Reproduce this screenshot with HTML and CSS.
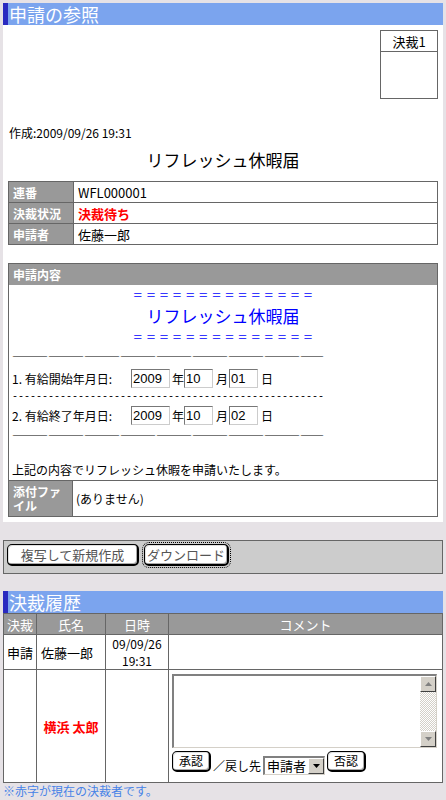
FILE: index.html
```html
<!DOCTYPE html>
<html lang="ja">
<head>
    <meta charset="UTF-8">
    <title>申請の参照</title>
    <link rel="stylesheet" href="styles.css">
</head>
<body>

<div class="page">
    <div class="bar">申請の参照</div>

    <div class="panel">
        <div class="stamp-row">
            <table class="stamp">
                <tr><th>決裁1</th></tr>
                <tr><td></td></tr>
            </table>
        </div>

        <div class="created">作成:2009/09/26 19:31</div>
        <h1 class="doc-title">リフレッシュ休暇届</h1>

        <table class="info">
            <tr><td class="label">連番</td><td>WFL000001</td></tr>
            <tr><td class="label">決裁状況</td><td class="red">決裁待ち</td></tr>
            <tr><td class="label">申請者</td><td>佐藤一郎</td></tr>
        </table>

        <div class="content-box">
            <div class="content-head">申請内容</div>
            <div class="content-body">
                <div class="eq">＝＝＝＝＝＝＝＝＝＝＝＝＝＝</div>
                <div class="blue-title">リフレッシュ休暇届</div>
                <div class="eq">＝＝＝＝＝＝＝＝＝＝＝＝＝＝</div>
                <div class="rule">――――――――――――――――――――――――――</div>
                <div class="date-line">
                    <span class="date-label">1. 有給開始年月日:</span>
                    <input class="field w4" type="text" value="2009">
                    <span class="unit">年</span>
                    <input class="field w2" type="text" value="10">
                    <span class="unit mid">月</span>
                    <input class="field w2" type="text" value="01">
                    <span class="unit last">日</span>
                </div>
                <div class="dash">----------------------------------------------------</div>
                <div class="date-line">
                    <span class="date-label">2. 有給終了年月日:</span>
                    <input class="field w4" type="text" value="2009">
                    <span class="unit">年</span>
                    <input class="field w2" type="text" value="10">
                    <span class="unit mid">月</span>
                    <input class="field w2" type="text" value="02">
                    <span class="unit last">日</span>
                </div>
                <div class="rule">――――――――――――――――――――――――――</div>
                <div class="blank"></div>
                <div class="message">上記の内容でリフレッシュ休暇を申請いたします。</div>
            </div>
            <div class="attach">
                <div class="attach-label">添付ファイル</div>
                <div class="attach-value">(ありません)</div>
            </div>
        </div>
    </div>

    <div class="actions">
        <button class="btn btn-copy">複写して新規作成</button>
        <button class="btn btn-dl">ダウンロード</button>
    </div>

    <div class="bar">決裁履歴</div>
    <table class="history">
        <colgroup>
            <col class="c-kind">
            <col class="c-name">
            <col class="c-date">
            <col>
        </colgroup>
        <tr>
            <th>決裁</th>
            <th>氏名</th>
            <th>日時</th>
            <th>コメント</th>
        </tr>
        <tr class="row-done">
            <td class="center">申請</td>
            <td>佐藤一郎</td>
            <td class="center date">09/09/26<br>19:31</td>
            <td></td>
        </tr>
        <tr class="row-now">
            <td></td>
            <td class="center red">横浜 太郎</td>
            <td></td>
            <td class="comment-cell">
                <div class="comment-box">
                    <div class="comment-area"></div>
                    <div class="scroll">
                        <div class="sbtn">
                            <svg width="7" height="4" viewBox="0 0 7 4"><path d="M3.5 0 L7 4 L0 4 Z" fill="#808080"/></svg>
                        </div>
                        <div class="track"></div>
                        <div class="sbtn">
                            <svg width="7" height="4" viewBox="0 0 7 4"><path d="M0 0 L7 0 L3.5 4 Z" fill="#808080"/></svg>
                        </div>
                    </div>
                </div>
                <div class="controls">
                    <button class="btn small">承認</button>
                    <span class="back-to">／戻し先</span>
                    <div class="select">
                        <span class="select-text">申請者</span>
                        <span class="select-arrow">
                            <svg width="7" height="4" viewBox="0 0 7 4"><path d="M0 0 L7 0 L3.5 4 Z" fill="#000"/></svg>
                        </span>
                    </div>
                    <button class="btn small">否認</button>
                </div>
            </td>
        </tr>
    </table>
    <div class="note">※赤字が現在の決裁者です。</div>
</div>

</body>
</html>
```

FILE: styles.css
```css
body {
    margin: 0;
    background-color: #e6e2e6;
    font-family: "Noto Sans CJK JP", "Liberation Sans", sans-serif;
    font-size: 12px;
    color: #000;
}

.page {
    padding: 3px;
}

/* 青い見出しバー */
.bar {
    height: 22px;
    line-height: 22px;
    background-color: #7ba4ee;
    border-left: 5px solid #2a2ac0;
    padding-left: 1px;
    color: #fff;
    font-size: 18px;
}

.panel {
    background-color: #fff;
    padding: 5px 5px 5px;
}

.stamp-row {
    display: flex;
    justify-content: flex-end;
}

.stamp {
    border-collapse: collapse;
    width: 58px;
}

.stamp th,
.stamp td {
    border: 1px solid #666;
    padding: 0;
}

.stamp th {
    height: 20px;
    font-weight: normal;
    font-size: 13px;
}

.stamp td {
    height: 46px;
}

.created {
    margin-top: 27px;
    line-height: 14px;
    padding-left: 1px;
}

.doc-title {
    margin: 10px 0 0;
    font-size: 17px;
    font-weight: normal;
    line-height: 20px;
    text-align: center;
}

.info {
    margin-top: 11px;
    width: 100%;
    border-collapse: collapse;
}

.info td {
    border: 1px solid #666;
    height: 20px;
    padding: 0 4px;
    font-size: 13px;
}

.info .label {
    width: 56px;
    background-color: #999;
    color: #fff;
    font-weight: bold;
    font-size: 12px;
}

.red {
    color: #f00;
    font-weight: bold;
}

/* 申請内容 */
.content-box {
    margin-top: 18px;
    border: 1px solid #666;
}

.content-head {
    height: 21px;
    line-height: 21px;
    padding-left: 4px;
    background-color: #999;
    color: #fff;
    font-weight: bold;
}

.content-body {
    padding: 0 3px 2px;
}

.eq {
    text-align: center;
    color: #0000ff;
    font-size: 10px;
    letter-spacing: 3.1px;
    padding-left: 3px;
    line-height: 20px;
}

.blue-title {
    text-align: center;
    color: #0000ff;
    font-size: 17px;
    line-height: 22px;
}

.rule {
    line-height: 20px;
    font-size: 12px;
    white-space: nowrap;
    overflow: hidden;
}

.dash {
    font-family: "Liberation Mono", monospace;
    font-size: 10px;
    line-height: 15px;
    white-space: nowrap;
    overflow: hidden;
}

.date-line {
    display: flex;
    align-items: center;
    height: 22px;
}

.date-label {
    width: 119px;
    flex: none;
}

.field {
    box-sizing: border-box;
    height: 19px;
    margin: 0;
    padding: 0 1px;
    border-top: 1px solid #777;
    border-left: 1px solid #777;
    border-right: 1px solid #ccc;
    border-bottom: 1px solid #ccc;
    font-family: "Liberation Sans", sans-serif;
    font-size: 13px;
    color: #000;
}

.w4 { width: 39px; }
.w2 { width: 29px; }

.unit {
    margin-left: 2px;
}

.unit.mid {
    margin-left: 3px;
    margin-right: 1px;
}

.unit.last {
    margin-left: 3px;
}

.blank {
    height: 16px;
}

.message {
    line-height: 16px;
}

.attach {
    display: flex;
    border-top: 1px solid #666;
    height: 35px;
}

.attach-label {
    box-sizing: border-box;
    width: 64px;
    padding: 0 10px 0 4px;
    border-right: 1px solid #666;
    background-color: #999;
    color: #fff;
    font-weight: bold;
    line-height: 14px;
    display: flex;
    align-items: center;
}

.attach-value {
    padding-left: 3px;
    display: flex;
    align-items: center;
}

/* ボタン */
.actions {
    margin: 18px 0 17px;
    background-color: #ccc;
    border: 1px solid #666;
    padding: 3px 3px 7px;
    display: flex;
    gap: 5px;
}

.btn {
    box-sizing: border-box;
    height: 22px;
    padding: 0;
    margin: 0;
    background-color: #fff;
    border: 1px solid #000;
    border-right-width: 2px;
    border-bottom-width: 2px;
    border-radius: 5px;
    box-shadow: inset -1px -1px 0 #aaa, inset 1px 1px 0 #e0e0e0;
    font-family: "Noto Sans CJK JP", sans-serif;
    font-size: 13px;
    line-height: 18px;
    color: #555;
}

.btn-copy { width: 132px; }

.btn-dl {
    width: 85px;
    outline: 1px dotted #000;
    outline-offset: 1px;
}

.btn.small {
    flex: none;
    width: 39px;
    height: 21px;
    color: #000;
    font-size: 12px;
}

/* 決裁履歴 */
.history {
    width: 100%;
    table-layout: fixed;
    border-collapse: collapse;
    background-color: #fff;
}

.c-kind { width: 33px; }
.c-name { width: 69px; }
.c-date { width: 63px; }

.history th,
.history td {
    border: 1px solid #666;
    padding: 0 4px;
    font-size: 13px;
}

.history th {
    height: 20px;
    background-color: #999;
    color: #fff;
    font-weight: normal;
    padding: 0;
}

.row-done td {
    height: 34px;
    line-height: 15px;
}

.history td.date {
    font-size: 12px;
    line-height: 17px;
}

.row-now td {
    height: 108px;
}

.center {
    text-align: center;
}

.history td.center {
    padding: 0;
}

.history .comment-cell {
    vertical-align: top;
    padding: 4px 5px 0 3px;
}

.comment-box {
    box-sizing: border-box;
    height: 74px;
    display: flex;
    border-top: 2px solid #808080;
    border-left: 2px solid #808080;
    border-right: 1px solid #d4d0c8;
    border-bottom: 1px solid #d4d0c8;
    background-color: #fff;
}

.comment-area {
    flex: 1;
}

.scroll {
    width: 16px;
    display: flex;
    flex-direction: column;
}

.sbtn {
    box-sizing: border-box;
    width: 16px;
    height: 16px;
    background-color: #d4d0c8;
    border-top: 1px solid #fff;
    border-left: 1px solid #fff;
    border-right: 1px solid #404040;
    border-bottom: 1px solid #404040;
    display: flex;
    align-items: center;
    justify-content: center;
}

.track {
    flex: 1;
    background-image: repeating-conic-gradient(#d4d0c8 0 25%, #fff 0 50%);
    background-size: 2px 2px;
}

.controls {
    display: flex;
    align-items: flex-start;
    margin-top: 3px;
    height: 27px;
}

.back-to {
    margin: 5px 2px 0 2px;
    line-height: 19px;
    font-size: 12px;
    white-space: nowrap;
}

.select {
    box-sizing: border-box;
    display: flex;
    flex: none;
    margin-top: 5px;
    margin-right: 2px;
    width: 62px;
    height: 19px;
    border-top: 2px solid #808080;
    border-left: 2px solid #808080;
    border-right: 1px solid #d4d0c8;
    border-bottom: 1px solid #d4d0c8;
    background-color: #fff;
}

.select-text {
    flex: 1;
    padding-left: 2px;
    font-size: 13px;
    line-height: 16px;
}

.select-arrow {
    box-sizing: border-box;
    width: 16px;
    background-color: #d4d0c8;
    border-top: 1px solid #fff;
    border-left: 1px solid #fff;
    border-right: 1px solid #404040;
    border-bottom: 1px solid #404040;
    display: flex;
    align-items: center;
    justify-content: center;
}

.note {
    margin-top: 1px;
    line-height: 14px;
    color: #4682e6;
    font-size: 12px;
}
```
